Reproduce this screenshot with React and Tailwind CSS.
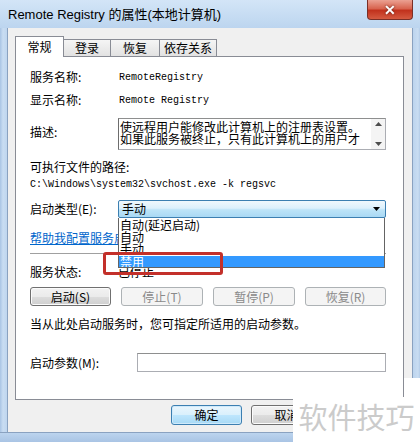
const cjk = "font-['Noto_Sans_CJK_SC','Liberation_Sans',sans-serif]";
const mono = "font-['Liberation_Mono','Noto_Sans_CJK_SC',monospace]";

const Btn = ({ children, disabled, primary, className = '' }) => (
    <div
        className={`flex items-center justify-center rounded-[3px] border text-[12px] leading-none ${
            disabled
                ? 'border-[#adb2b5] bg-[#f4f4f4] text-[#8a8a8a]'
                : primary
                    ? 'border-[#3c7fb1] bg-[linear-gradient(#eaf6fd_0%,#d9f0fc_50%,#bee6fd_51%,#a7d9f5_100%)] text-black shadow-[inset_0_0_0_1px_#cfeafb]'
                    : 'border-[#707070] bg-[linear-gradient(#f2f2f2_0%,#ebebeb_50%,#dddddd_51%,#cfcfcf_100%)] text-black shadow-[inset_0_0_0_1px_#fbfbfb]'
        } ${className}`}
    >
        {children}
    </div>
);

const Tab = ({ label, active, width }) => (
    <div
        className={`flex items-center justify-center border border-[#898c95] text-[12px] ${
            active ? 'h-[21px] bg-white border-b-0 z-10 -mb-px' : 'h-[17px] bg-[linear-gradient(#f5f5f5,#e2e2e2)] border-b-0 -ml-px'
        }`}
        style={{ width }}
    >
        {label}
    </div>
);

const App = () => {
    return (
        <div className={`w-[420px] h-[442px] relative overflow-hidden bg-[#bcd5ef] flex flex-col ${cjk} text-black`}>
            {/* Title bar */}
            <div className="h-[28px] flex items-center pl-[8px] bg-[linear-gradient(#d3e5f7,#bcd5ef)] relative">
                <span className="text-[13px] font-['Liberation_Sans','Noto_Sans_CJK_SC',sans-serif] text-black mt-[2px]">
                    Remote Registry 的属性(本地计算机)
                </span>
                <div className="absolute top-0 right-[7px] w-[46px] h-[20px] rounded-b-[4px] border border-t-0 border-[#7a2f26] bg-[linear-gradient(#eba192_0%,#d8644f_45%,#c2321d_55%,#d55a40_100%)] flex items-center justify-center">
                    <span className="text-white text-[14px] font-bold font-['Liberation_Sans',sans-serif] leading-none drop-shadow-[0_0_1px_#5a1a10]">✕</span>
                </div>
            </div>

            <div className="flex h-[404px]">
                <div className="w-[8px] bg-[linear-gradient(90deg,#a9c4e4_0px,#c9ddf2_3px,#bcd4ee_8px)] border-r border-[#8aa2c0]" />

                {/* Client area */}
                <div className="w-[404px] bg-[#f0f0f0] flex flex-col">
                    {/* Tabs */}
                    <div className="mt-[8px] pl-[7px] flex items-end h-[20px]">
                        <Tab label="常规" active width={49} />
                        <Tab label="登录" width={48} />
                        <Tab label="恢复" width={50} />
                        <Tab label="依存关系" width={58} />
                    </div>

                    {/* Panel */}
                    <div className="ml-[7px] w-[389px] h-[344px] bg-white border border-[#898c95] relative">
                        <div className="pl-[14px] pr-[17px] flex flex-col text-[12px]">
                            <div className="mt-[10px] h-[20px] flex items-center">
                                <div className="w-[88px]">服务名称:</div>
                                <div className={`${mono} text-[10px] pl-px`}>RemoteRegistry</div>
                            </div>
                            <div className="mt-[3px] h-[20px] flex items-center">
                                <div className="w-[88px]">显示名称:</div>
                                <div className={`${mono} text-[10px] pl-px`}>Remote Registry</div>
                            </div>
                            <div className="mt-[8px] h-[32px] flex">
                                <div className="w-[88px] pt-[6px] leading-[16px]">描述:</div>
                                <div className="flex-1 flex border border-[#abadb3] border-l-[#6d6d6d] border-t-[#8e8f8f]">
                                    <div className="flex-1 pl-px pt-[2px] leading-[12px] overflow-hidden whitespace-nowrap">
                                        <div>使远程用户能修改此计算机上的注册表设置。</div>
                                        <div>如果此服务被终止，只有此计算机上的用户才</div>
                                    </div>
                                    <div className="w-[14px] bg-[#f4f4f4] flex flex-col justify-between items-center py-[3px]">
                                        <svg width="7" height="4" viewBox="0 0 7 4"><path d="M0 4 L3.5 0 L7 4 Z" fill="#4d4d4d" /></svg>
                                        <svg width="7" height="4" viewBox="0 0 7 4"><path d="M0 0 L3.5 4 L7 0 Z" fill="#4d4d4d" /></svg>
                                    </div>
                                </div>
                            </div>
                            <div className="mt-[9px] h-[16px] flex items-center">可执行文件的路径:</div>
                            <div className={`mt-px h-[16px] flex items-center ${mono} text-[10px]`}>
                                {"C:\\Windows\\system32\\svchost.exe -k regsvc"}
                            </div>
                            <div className="mt-[8px] h-[18px] flex items-center">
                                <div className="w-[88px]">启动类型(E):</div>
                                <div className="flex-1 h-full rounded-[2px] border border-[#3c7fb1] bg-[linear-gradient(#f0f8fd_0%,#dcf0fc_45%,#bde4f8_55%,#a9d9f4_100%)] flex items-center justify-between pl-[3px] pr-[5px]">
                                    <span className="leading-none">手动</span>
                                    <svg width="7" height="4" viewBox="0 0 7 4"><path d="M0 0 L3.5 4 L7 0 Z" fill="#000" /></svg>
                                </div>
                            </div>
                            <div className="mt-[12px] h-[16px] flex items-center text-[#0066cc] underline whitespace-nowrap">
                                帮助我配置服务启动选项。
                            </div>
                            <div className="mt-[7px] h-px bg-[#a0a0a0]" />
                            <div className="mt-[10px] h-[16px] flex items-center">
                                <div className="w-[88px]">服务状态:</div>
                                <div>已停止</div>
                            </div>
                            <div className="mt-[7px] h-[19px] flex justify-between">
                                <Btn className="w-[81px]">启动(S)</Btn>
                                <Btn disabled className="w-[82px]">停止(T)</Btn>
                                <Btn disabled className="w-[82px]">暂停(P)</Btn>
                                <Btn disabled className="w-[81px]">恢复(R)</Btn>
                            </div>
                            <div className="mt-[10px] h-[16px] flex items-center whitespace-nowrap">
                                当从此处启动服务时，您可指定所适用的启动参数。
                            </div>
                            <div className="mt-[21px] h-[19px] flex items-center">
                                <div className="w-[107px]">启动参数(M):</div>
                                <div className="flex-1 h-full border border-[#abadb3] border-t-[#8e8f8f] bg-white" />
                            </div>
                        </div>

                        {/* Open dropdown list */}
                        <div className="absolute left-[102px] top-[161px] w-[267px] h-[50px] bg-white border border-t-0 border-[#646464] overflow-hidden flex flex-col text-[12px] z-20">
                            <div className="mt-px h-[12px] leading-[12px] pl-[1px] whitespace-nowrap">自动(延迟启动)</div>
                            <div className="h-[12px] leading-[12px] pl-[1px]">自动</div>
                            <div className="h-[12px] leading-[12px] pl-[1px]">手动</div>
                            <div className="mt-px h-[12px] leading-[12px] bg-[#3399ff] text-white pl-[1px]">禁用</div>
                        </div>

                        {/* Red highlight box */}
                        <div className="absolute left-[87px] top-[195px] w-[120px] h-[23px] border-[3px] border-[#c3302a] rounded-[3px] z-30" />
                    </div>

                    {/* Dialog buttons */}
                    <div className="mt-[5px] flex justify-end gap-[9px] pr-[10px]">
                        <Btn primary className="w-[71px] h-[20px]">确定</Btn>
                        <Btn className="w-[71px] h-[20px]">取消</Btn>
                        <Btn disabled className="w-[71px] h-[20px]" />
                    </div>
                </div>

                <div className="flex-1 border-l border-[#8aa2c0] bg-[linear-gradient(90deg,#bcd4ee_0px,#c9ddf2_5px,#a9c4e4_8px)]" />
            </div>

            <div className="flex-1 border-t border-[#8aa2c0] bg-[linear-gradient(#bcd4ee,#a9c4e4)]" />

            {/* Watermark */}
            <div className="absolute left-[404px] top-[378px] w-[16px] h-[20px] bg-white" />
            <div className="absolute left-[293px] top-[397px] w-[127px] h-[45px] bg-white flex items-center justify-center">
                <span className="text-[29px] leading-none text-[#cbcbcb] -mt-[6px]">软件技巧</span>
            </div>
        </div>
    );
};

export default App;
